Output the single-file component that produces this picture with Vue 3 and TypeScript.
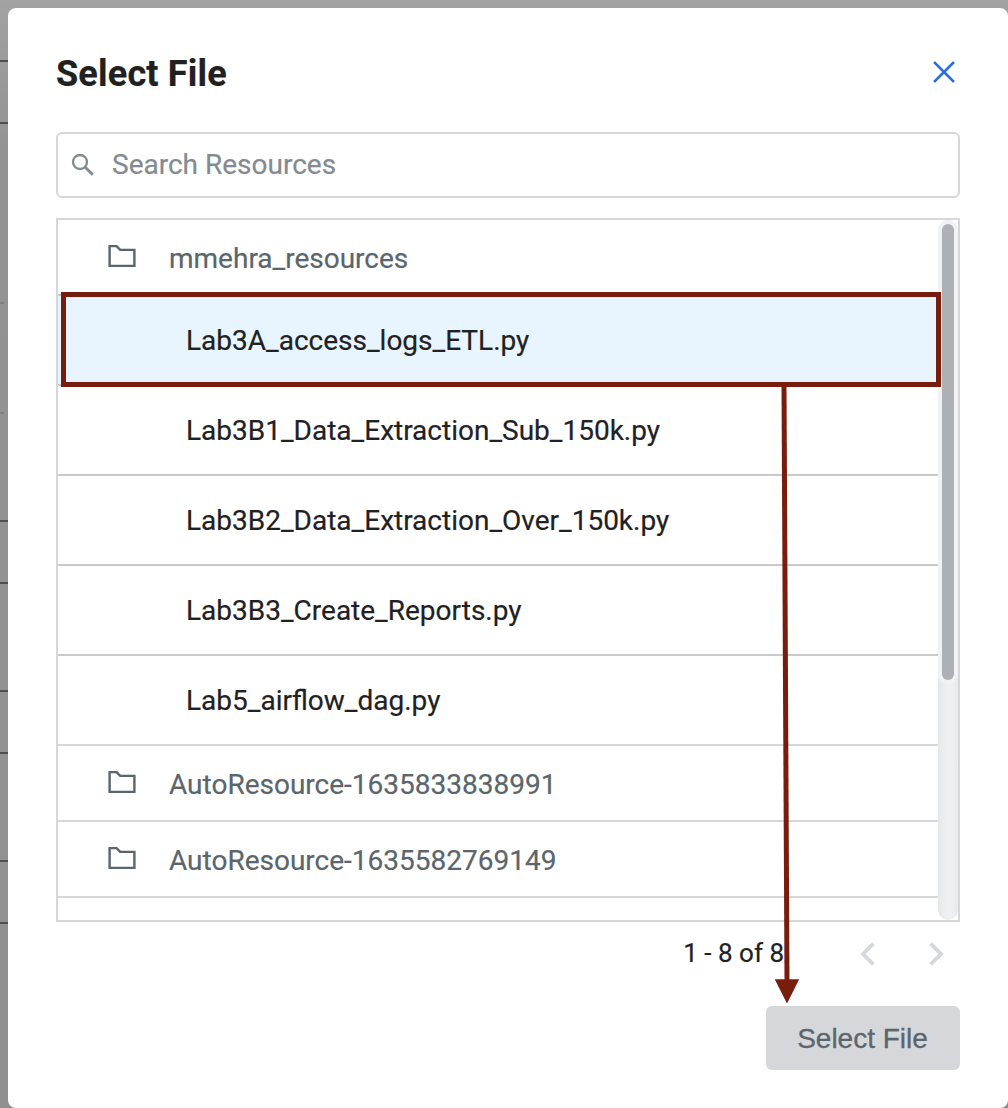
<script setup lang="ts">
interface Resource {
  kind: 'folder' | 'file'
  name: string
  selected?: boolean
}

const resources: Resource[] = [
  { kind: 'folder', name: 'mmehra_resources' },
  { kind: 'file', name: 'Lab3A_access_logs_ETL.py', selected: true },
  { kind: 'file', name: 'Lab3B1_Data_Extraction_Sub_150k.py' },
  { kind: 'file', name: 'Lab3B2_Data_Extraction_Over_150k.py' },
  { kind: 'file', name: 'Lab3B3_Create_Reports.py' },
  { kind: 'file', name: 'Lab5_airflow_dag.py' },
  { kind: 'folder', name: 'AutoResource-1635833838991' },
  { kind: 'folder', name: 'AutoResource-1635582769149' },
]

// Divider positions of the dimmed page behind the dialog
const strongLines: number[] = [60, 122, 520, 582, 690, 752, 860, 922]
const faintLines: number[] = [302, 412]
</script>

<template>
  <div class="page">
    <svg class="backdrop" width="8" height="1108" aria-hidden="true">
      <rect v-for="y in strongLines" :key="y" x="0" :y="y" width="8" height="2" fill="#4c5054" />
      <rect v-for="y in faintLines" :key="y" x="0" :y="y" width="4" height="2" fill="#808080" />
    </svg>
    <section class="dialog" role="dialog">
      <header class="head">
        <h1 class="title">Select File</h1>
        <svg class="close" width="24" height="24" viewBox="0 0 24 24">
          <path d="M2 2L22 22M22 2L2 22" fill="none" stroke="#2a6fe0" stroke-width="2.5" />
        </svg>
      </header>

      <div class="search">
        <svg width="24" height="24" viewBox="0 0 24 24">
          <circle cx="9" cy="9" r="7" fill="none" stroke="#838b90" stroke-width="2.3" />
          <path d="M14.2 14.2L21.8 21.8" fill="none" stroke="#838b90" stroke-width="2.9" />
        </svg>
        <span class="placeholder">Search Resources</span>
      </div>

      <div class="list">
        <div class="rows">
          <div
            v-for="item in resources"
            :key="item.name"
            :class="['row', item.kind, { selected: item.selected }]"
          >
            <svg v-if="item.kind === 'folder'" class="folder-icon" width="28" height="24" viewBox="0 0 28 24">
              <path d="M1.6 2.1H8.6L12.2 5.9H26.4V21.9H1.6Z" fill="none" stroke="#5a656c" stroke-width="2.4" />
            </svg>
            <span class="name">{{ item.name }}</span>
          </div>
        </div>
        <div class="track"><div class="thumb"></div></div>
      </div>

      <div class="pager">
        <span class="range">1 - 8 of 8</span>
        <svg class="prev" width="16" height="24" viewBox="0 0 16 24">
          <path d="M13.4 1.6L3 12L13.4 22.4" fill="none" stroke="#d6d7db" stroke-width="3.8" />
        </svg>
        <svg class="next" width="16" height="24" viewBox="0 0 16 24">
          <path d="M2.6 1.6L13 12L2.6 22.4" fill="none" stroke="#d6d7db" stroke-width="3.8" />
        </svg>
      </div>

      <footer class="foot">
        <button class="submit" type="button">Select File</button>
      </footer>
    </section>

    <svg class="annotation" width="1008" height="1108" viewBox="0 0 1008 1108" aria-hidden="true">
      <rect x="63.5" y="294.5" width="875" height="90" fill="none" stroke="#781c0e" stroke-width="5" />
      <path d="M784 386L787 982" stroke="#781c0e" stroke-width="5" />
      <path d="M774.7 979.2H799.2L787 1003.6Z" fill="#781c0e" />
    </svg>
  </div>
</template>

<style>
body {
  background: #929292;
}
</style>

<style scoped>
.page {
  position: relative;
  box-sizing: border-box;
  width: 1008px;
  height: 1108px;
  padding: 8px 0 0 8px;
  overflow: hidden;
  background: linear-gradient(180deg, #a2a2a2 0, #a0a0a0 20px, #939393 150px, #909090 100%);
  font-family: Roboto, "Liberation Sans", sans-serif;
  -webkit-text-stroke: 0.2px currentColor;
}

.backdrop {
  position: absolute;
  top: 0;
  left: 0;
}

.dialog {
  display: flex;
  flex-direction: column;
  box-sizing: border-box;
  width: 1000px;
  height: 1100px;
  padding: 0 48px;
  border-radius: 8px;
  background: #fff;
}

.head {
  display: flex;
  align-items: center;
  justify-content: space-between;
  height: 124px;
  padding: 2px 4px 0 0;
  box-sizing: border-box;
}

.title {
  margin: 6px 0 0;
  color: #212121;
  font-size: 36px;
  font-weight: 700;
  letter-spacing: 0.2px;
  line-height: 44px;
}

.close {
  margin-top: 2px;
}

.search {
  display: flex;
  flex: none;
  align-items: center;
  gap: 17px;
  box-sizing: border-box;
  height: 66px;
  padding: 0 13px;
  border: 2px solid #d6d7db;
  border-radius: 6px;
}

.placeholder {
  color: #838b90;
  font-size: 28px;
  line-height: 36px;
}

.list {
  display: flex;
  flex: none;
  box-sizing: border-box;
  height: 704px;
  margin-top: 20px;
  border: 2px solid #d6d7db;
}

.rows {
  flex: 1;
}

.row {
  display: flex;
  align-items: center;
  box-sizing: border-box;
  font-size: 28px;
  line-height: 36px;
  white-space: nowrap;
}

.folder {
  height: 76px;
  padding-left: 50px;
  border-bottom: 2px solid #d6d7db;
  color: #5a656c;
}

.folder .name {
  margin: 3px 0 0 33px;
}

.folder-icon {
  margin-top: -2px;
}

.file {
  height: 90px;
  padding: 2px 0 0 128px;
  border-bottom: 2px solid #cacaca;
  color: #1f2123;
}

.selected {
  background: #e8f5fe;
}

.row:nth-child(1) {
  border-bottom-color: #cacaca;
}

.row:nth-child(6) {
  border-bottom-color: #d6d7db;
}

.track {
  box-sizing: border-box;
  width: 20px;
  padding: 4px;
  border-radius: 10px;
  background: linear-gradient(90deg, #e5e6e8, #eff0f2 40%, #eff0f2 70%, #e8e9eb);
}

.thumb {
  height: 456px;
  border-radius: 6px;
  background: #adb0b5;
  box-shadow: 0 0 0 4px #f1f2f4;
}

.pager {
  display: flex;
  align-items: center;
  justify-content: flex-end;
  height: 64px;
  padding-right: 16px;
}

.range {
  margin-top: -2px;
  color: #1f2123;
  font-size: 26px;
  line-height: 32px;
}

.prev {
  margin-left: 76px;
}

.next {
  margin-left: 52px;
}

.foot {
  display: flex;
  justify-content: flex-end;
  margin-top: 20px;
}

.submit {
  width: 194px;
  height: 64px;
  padding: 2px 1px 0 0;
  border: 0;
  border-radius: 6px;
  background: #d6d7db;
  color: #5a656c;
  font: 28px/62px "Liberation Sans", Arial, sans-serif;
  -webkit-text-stroke: 0.3px currentColor;
}

.annotation {
  position: absolute;
  top: 0;
  left: 0;
  pointer-events: none;
}
</style>
